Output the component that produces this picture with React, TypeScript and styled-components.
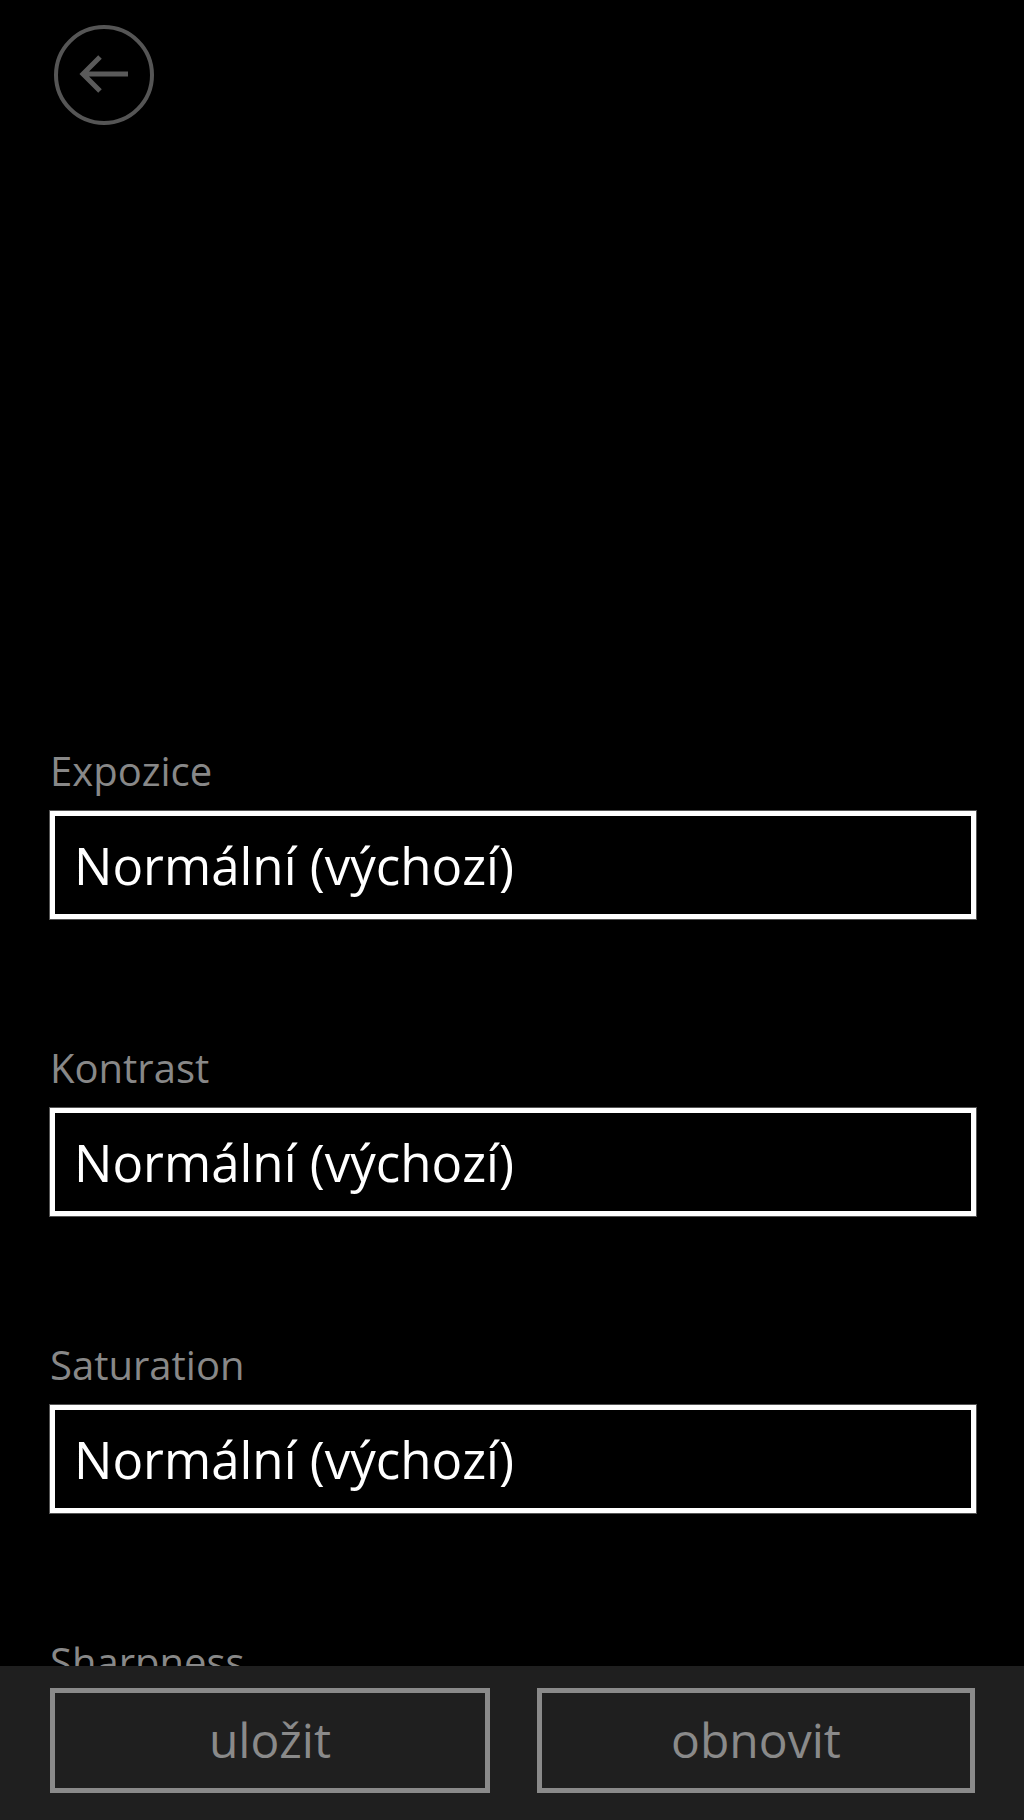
import React from "react";
import styled, { createGlobalStyle } from "styled-components";

const GlobalStyle = createGlobalStyle`
  html, body {
    margin: 0;
    padding: 0;
    background: #000;
  }
  body {
    font-family: "Open Sans", "Noto Sans", sans-serif;
  }
  * { box-sizing: border-box; }
`;

const Screen = styled.div`
  width: 1024px;
  height: 1820px;
  display: flex;
  flex-direction: column;
  background: #000;
  overflow: hidden;
`;

const Content = styled.div`
  flex: 1;
  min-height: 0;
  overflow: hidden;
  display: flex;
  flex-direction: column;
`;

const Header = styled.header`
  height: 150px;
  padding: 23px 0 0 52px;
`;

const BackButton = styled.button`
  width: 104px;
  height: 104px;
  padding: 0;
  border: none;
  background: transparent;
  display: block;
  cursor: pointer;
`;

const Form = styled.div`
  display: flex;
  flex-direction: column;
  gap: 125px;
  padding: 620px 48px 0 50px;
`;

const Field = styled.div`
  display: flex;
  flex-direction: column;
`;

const Label = styled.div`
  font-size: 40px;
  line-height: 48px;
  height: 48px;
  margin-bottom: 16px;
  color: #888;
  white-space: nowrap;
`;

const Select = styled.div`
  height: 108px;
  border: 5px solid #fff;
  background: #000;
  color: #fff;
  font-size: 51px;
  line-height: 98px;
  padding-left: 19px;
  white-space: nowrap;
  box-shadow: 0 0 0 1px #555;
`;

const AppBar = styled.footer`
  height: 154px;
  flex-shrink: 0;
  background: #1f1f1f;
  display: grid;
  grid-template-columns: 440px 438px;
  column-gap: 47px;
  padding: 22px 0 0 50px;
`;

const BarButton = styled.button`
  height: 105px;
  border: 5px solid #8a8a8a;
  background: #1f1f1f;
  color: #8a8a8a;
  font-family: "Open Sans", "Noto Sans", sans-serif;
  font-size: 48px;
  line-height: 66px;
  padding: 0 0 2px;
  display: flex;
  align-items: center;
  justify-content: center;
  cursor: pointer;
`;

const BackIcon = () => (
  <svg width="104" height="104" viewBox="0 0 104 104" fill="none">
    <circle cx="52" cy="52" r="48" stroke="#555" strokeWidth="4" />
    <path
      d="M31 51 L76 51 M48 34 L31 51 L48 68"
      stroke="#5a5a5a"
      strokeWidth="5"
      strokeLinecap="butt"
      strokeLinejoin="miter"
    />
  </svg>
);

const fields = ["Expozice", "Kontrast", "Saturation", "Sharpness"];

export default function App() {
  return (
    <>
      <GlobalStyle />
      <Screen>
        <Content>
          <Header>
            <BackButton aria-label="Zpět">
              <BackIcon />
            </BackButton>
          </Header>
          <Form>
            {fields.map((f) => (
              <Field key={f}>
                <Label>{f}</Label>
                <Select>Normální (výchozí)</Select>
              </Field>
            ))}
          </Form>
        </Content>
        <AppBar>
          <BarButton>uložit</BarButton>
          <BarButton>obnovit</BarButton>
        </AppBar>
      </Screen>
    </>
  );
}
